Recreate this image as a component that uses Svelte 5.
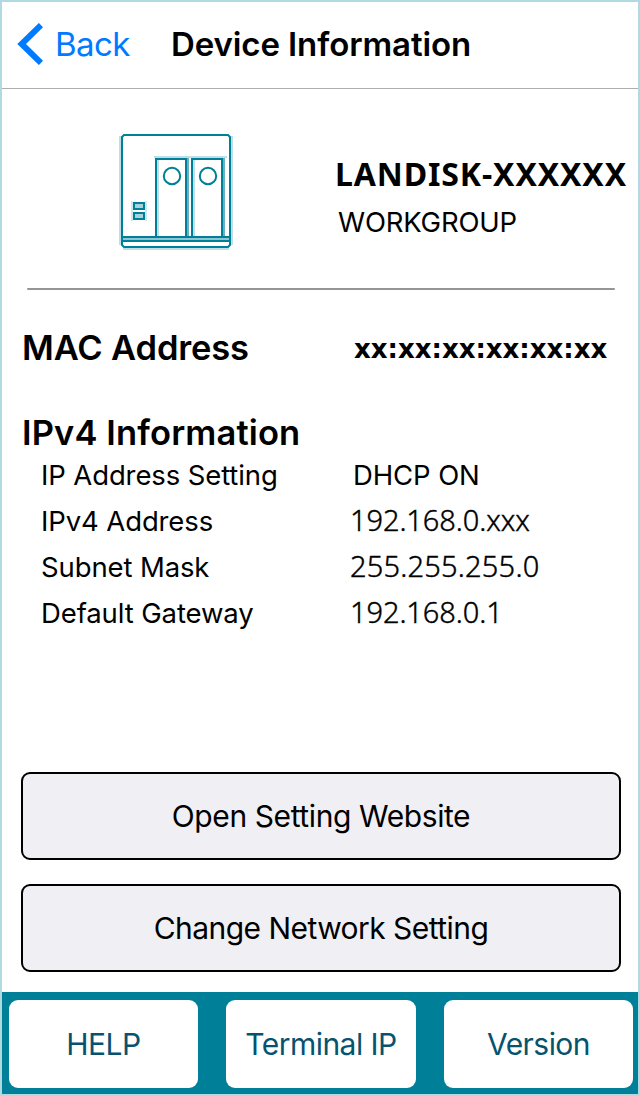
<script>
  const rows = [
    { label: 'IP Address Setting', value: 'DHCP ON', plain: true },
    { label: 'IPv4 Address', value: '192.168.0.xxx', tight: true },
    { label: 'Subnet Mask', value: '255.255.255.0' },
    { label: 'Default Gateway', value: '192.168.0.1', tight: true }
  ];
</script>

<div class="screen">
  <header>
    <button class="back">
      <svg width="26" height="42" viewBox="0 0 26 42"><path d="M24 2.1 4.6 21 24 39.9" fill="none" stroke="#007aff" stroke-width="6" /></svg>
      <span>Back</span>
    </button>
    <h1>Device Information</h1>
  </header>

  <main>
    <section class="device">
      <svg class="nas" width="116" height="118" viewBox="0 0 116 118" fill="none">
        <g stroke="#bfdfe6" stroke-width="2">
          <path d="M2 4v109M114 4v109M5 117h106M36 25h73M40 28v76M76 28v76" />
          <path d="M14 69v20M28 69v20" stroke-width="1.5" />
        </g>
        <path d="M70 26v78M106 26v78" stroke="#66b0c2" stroke-width="2" />
        <rect x="3" y="104" width="110" height="4" fill="#8fc5d2" />
        <g stroke="#007f99" stroke-width="2">
          <path d="M6 3h104l2 2v108l-2 2H6l-2-2V5z" />
          <path d="M3 105h110M3 109h110" />
          <path d="M38 104V27h30v77M74 104V27h30v77" />
          <circle cx="54" cy="44" r="8.2" />
          <circle cx="90" cy="44" r="8.2" />
          <path d="M16 71h10v6H16zM16 81h10v6H16z" fill="#a6d2dc" />
        </g>
      </svg>
      <div class="names">
        <strong>LANDISK-XXXXXX</strong>
        <span>WORKGROUP</span>
      </div>
    </section>
    <div class="rule"></div>
    <section class="mac">
      <h2>MAC Address</h2>
      <b>xx:xx:xx:xx:xx:xx</b>
    </section>
    <section class="ipv4">
      <h2>IPv4 Information</h2>
      <dl>
        {#each rows as row}
          <dt>{row.label}</dt>
          <dd class:plain={row.plain} class:tight={row.tight}>{row.value}</dd>
        {/each}
      </dl>
    </section>
    <section class="actions">
      <button>Open Setting Website</button>
      <button class="change">Change Network Setting</button>
    </section>
  </main>

  <footer>
    <button>HELP</button>
    <button>Terminal IP</button>
    <button>Version</button>
  </footer>
</div>

<style>
  :global(body) { background: #fff; }
  .screen, .screen * { box-sizing: border-box; margin: 0; }
  .screen {
    width: 640px;
    height: 1096px;
    border: 2px solid #b0d9e1;
    display: flex;
    flex-direction: column;
    overflow: hidden;
    background: #fff;
    color: #000;
    font-family: Inter, sans-serif;
    white-space: nowrap;
  }
  button { font-family: inherit; padding: 0; cursor: pointer; }
  header { height: 87px; flex: none; border-bottom: 1px solid #aeaeae; display: flex; }
  .back {
    width: 169px; height: 84px; padding-left: 15px; border: 0; background: none;
    color: #007aff; display: flex; align-items: center; gap: 12px;
    font-size: 33px; line-height: 84px; letter-spacing: -0.6px;
  }
  .back svg { flex: none; }
  h1 { font-size: 33px; font-weight: 600; line-height: 84px; letter-spacing: -0.1px; }
  main { flex: 1; display: flex; flex-direction: column; }
  .device { height: 199px; display: flex; padding: 43px 0 0 116px; }
  .nas { flex: none; }
  .names { display: flex; flex-direction: column; margin-left: 101px; }
  .names strong { font: 700 32px/44px "Noto Sans", sans-serif; padding-top: 20px; letter-spacing: 0.88px; }
  .names span { font-size: 27.5px; line-height: 40px; margin: 6px 0 0 3px; letter-spacing: -0.2px; }
  .screen .rule { width: 588px; height: 2px; background: #959595; margin-left: 25px; flex: none; border-radius: 1px; }
  h2 { font-size: 34.5px; font-weight: 600; line-height: 44px; }
  .mac { display: grid; grid-template-columns: 332px auto; padding: 36px 0 0 20px; height: 121px; }
  .mac h2 { letter-spacing: -0.15px; }
  .mac b { font: 700 26px/46px "DejaVu Sans", sans-serif; }
  .ipv4 { padding-left: 20px; }
  .ipv4 h2 { letter-spacing: 0.13px; line-height: 43px; height: 41px; }
  dl { display: grid; grid-template-columns: 309px auto; grid-auto-rows: 46px; padding-left: 19px; font-size: 27.5px; line-height: 46px; letter-spacing: -0.12px; }
  dd { font-family: "Noto Sans", sans-serif; font-weight: 300; font-size: 29px; letter-spacing: 0.2px; line-height: 44px; -webkit-text-stroke: 0.4px #000; }
  dd.tight { letter-spacing: -0.1px; }
  dd.plain { font-family: Inter, sans-serif; font-weight: 400; font-size: 27.5px; padding-left: 3px; line-height: 46px; letter-spacing: -0.1px; -webkit-text-stroke: 0; }
  .actions { margin-top: auto; padding: 0 17px 20px 19px; display: grid; gap: 24px; }
  .actions button { height: 88px; border: 2px solid #000; border-radius: 9px; background: #efeff4; color: #000; font-size: 30px; letter-spacing: -0.4px; }
  .actions .change { letter-spacing: -0.55px; }
  footer { height: 102px; flex: none; background: #007f99; padding: 8px 5px 6px 7px; display: grid; grid-template-columns: 189px 190px 189px; justify-content: space-between; }
  footer button { height: 88px; border: 0; border-radius: 9px; background: #fff; color: #06536f; font-size: 30px; letter-spacing: -0.55px; }
</style>
